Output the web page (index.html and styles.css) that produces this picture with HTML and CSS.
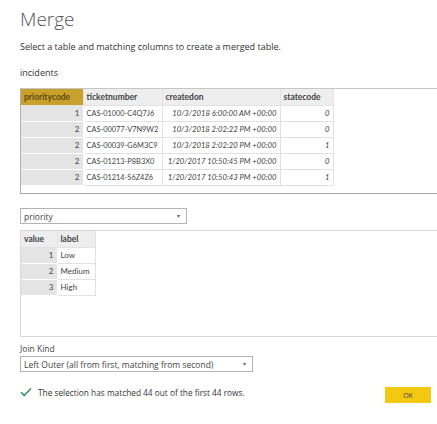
FILE: index.html
```html
<!DOCTYPE html>
<html lang="en">
  <head>
    <meta charset="UTF-8" />
    <meta name="viewport" content="width=device-width, initial-scale=1.0" />
    <title>Merge</title>
    <link rel="stylesheet" href="styles.css">
  </head>
  <body>
    <div class="dialog">
      <h1>Merge</h1>
      <p class="intro">Select a table and matching columns to create a merged table.</p>

      <div class="table-name">incidents</div>
      <div class="panel panel-top">
        <table class="grid grid-main">
          <colgroup>
            <col class="w1">
            <col class="w2">
            <col class="w3">
            <col class="w4">
          </colgroup>
          <tr>
            <th class="key selected">prioritycode</th>
            <th>ticketnumber</th>
            <th>createdon</th>
            <th>statecode</th>
          </tr>
          <tr>
            <td class="key num">1</td>
            <td class="id">CAS-01000-C4Q7J6</td>
            <td class="num it">10/3/2018 6:00:00 AM +00:00</td>
            <td class="num it">0</td>
          </tr>
          <tr>
            <td class="key num">2</td>
            <td class="id">CAS-00077-V7N9W2</td>
            <td class="num it">10/3/2018 2:02:22 PM +00:00</td>
            <td class="num it">0</td>
          </tr>
          <tr>
            <td class="key num">2</td>
            <td class="id">CAS-00039-G6M3C9</td>
            <td class="num it">10/3/2018 2:02:20 PM +00:00</td>
            <td class="num it">1</td>
          </tr>
          <tr>
            <td class="key num">2</td>
            <td class="id">CAS-01213-P8B3X0</td>
            <td class="num it">1/20/2017 10:50:45 PM +00:00</td>
            <td class="num it">0</td>
          </tr>
          <tr>
            <td class="key num">2</td>
            <td class="id">CAS-01214-S6Z4Z6</td>
            <td class="num it">1/20/2017 10:50:43 PM +00:00</td>
            <td class="num it">1</td>
          </tr>
        </table>
      </div>

      <div class="select select-table">
        <span>priority</span>
        <span class="caret">&#9662;</span>
      </div>

      <div class="panel panel-bottom">
        <table class="grid grid-lookup">
          <colgroup>
            <col class="v1">
            <col class="v2">
          </colgroup>
          <tr>
            <th class="key">value</th>
            <th>label</th>
          </tr>
          <tr>
            <td class="key num">1</td>
            <td>Low</td>
          </tr>
          <tr>
            <td class="key num">2</td>
            <td>Medium</td>
          </tr>
          <tr>
            <td class="key num">3</td>
            <td>High</td>
          </tr>
        </table>
      </div>

      <div class="join-label">Join Kind</div>
      <div class="select select-join">
        <span>Left Outer (all from first, matching from second)</span>
        <span class="caret">&#9662;</span>
      </div>

      <div class="footer">
        <div class="status">
          <svg class="check" width="12" height="10" viewBox="0 0 12 10">
            <path d="M1 5.2 L4.2 8.4 L11 1.4" fill="none" stroke="#2f8f5b" stroke-width="1.5" />
          </svg>
          <span>The selection has matched 44 out of the first 44 rows.</span>
        </div>
        <button class="btn-ok">OK</button>
      </div>
    </div>
  </body>
</html>
```

FILE: styles.css
```css
body {
  margin: 0;
  padding: 0;
  background-color: #ffffff;
  color: #333333;
  font-family: "Open Sans", "Liberation Sans", sans-serif;
  overflow: hidden;
}

.dialog {
  padding: 6px 0 0 20px;
}

h1 {
  margin: 0;
  font-size: 19px;
  font-weight: 300;
  line-height: 26px;
  color: #555555;
}

.intro {
  margin: 9px 0 0;
  font-size: 9px;
  line-height: 12px;
  color: #333333;
}

.table-name {
  margin-top: 14px;
  font-size: 9px;
  line-height: 12px;
}

.panel {
  margin-right: -10px;
  border: 1px solid #c6c6c6;
  border-bottom-color: #a8a8a8;
  border-left-color: #b0b0b0;
  box-sizing: border-box;
}

.panel-top {
  margin-top: 9px;
  height: 106px;
}

.panel-bottom {
  margin-top: 6px;
  height: 107px;
  border-color: #d8d8d8;
}

.grid {
  border-collapse: collapse;
  table-layout: fixed;
  font-family: Lato, "Open Sans", sans-serif;
  font-size: 8px;
  color: #444444;
}

.grid-main {
  width: 312px;
}

.grid-lookup {
  width: 74px;
}

.grid th,
.grid td {
  height: 16px;
  padding: 0 3px;
  box-sizing: border-box;
  border: 1px solid #e2e2e2;
  white-space: nowrap;
  overflow: hidden;
}

.grid tr:first-child th {
  border-top: none;
}

.grid th:first-child,
.grid td:first-child {
  border-left: none;
}

.grid th {
  background-color: #eeeeee;
  text-align: left;
  font-size: 8.5px;
  font-weight: 700;
  color: #444444;
}

.grid td.key {
  background-color: #e4e4e4;
  border-color: #ffffff;
}

.grid th.selected {
  background-color: #c9a02b;
  color: #5e4a12;
}

.grid td.id {
  font-size: 7.4px;
  padding: 0 2px 0 3px;
}

.num {
  text-align: right;
}

.it {
  font-style: italic;
  font-size: 7.7px;
}

.w1 { width: 62px; }
.w2 { width: 79px; }
.w3 { width: 118px; }
.w4 { width: 53px; }

.v1 { width: 36px; }
.v2 { width: 38px; }

.select {
  display: flex;
  justify-content: space-between;
  align-items: center;
  height: 16px;
  padding: 0 6px 0 3px;
  box-sizing: border-box;
  border: 1px solid #b4b4b4;
  font-size: 8.5px;
  color: #444444;
}

.caret {
  font-size: 6px;
  color: #666666;
}

.select-table {
  margin-top: 14px;
  width: 167px;
}

.join-label {
  margin-top: 6px;
  font-size: 8.5px;
  line-height: 12px;
  color: #444444;
}

.select-join {
  margin-top: 1px;
  width: 233px;
}

.footer {
  display: flex;
  justify-content: space-between;
  align-items: center;
  margin-top: 9px;
  padding-right: 6px;
}

.status {
  display: flex;
  align-items: center;
  gap: 6px;
  font-size: 8.3px;
  color: #333333;
}

.btn-ok {
  width: 46px;
  height: 16px;
  margin-top: 6px;
  border: none;
  background-color: #f2c811;
  font-family: "Open Sans", sans-serif;
  font-size: 7px;
  color: #444444;
  padding: 0;
}
```
